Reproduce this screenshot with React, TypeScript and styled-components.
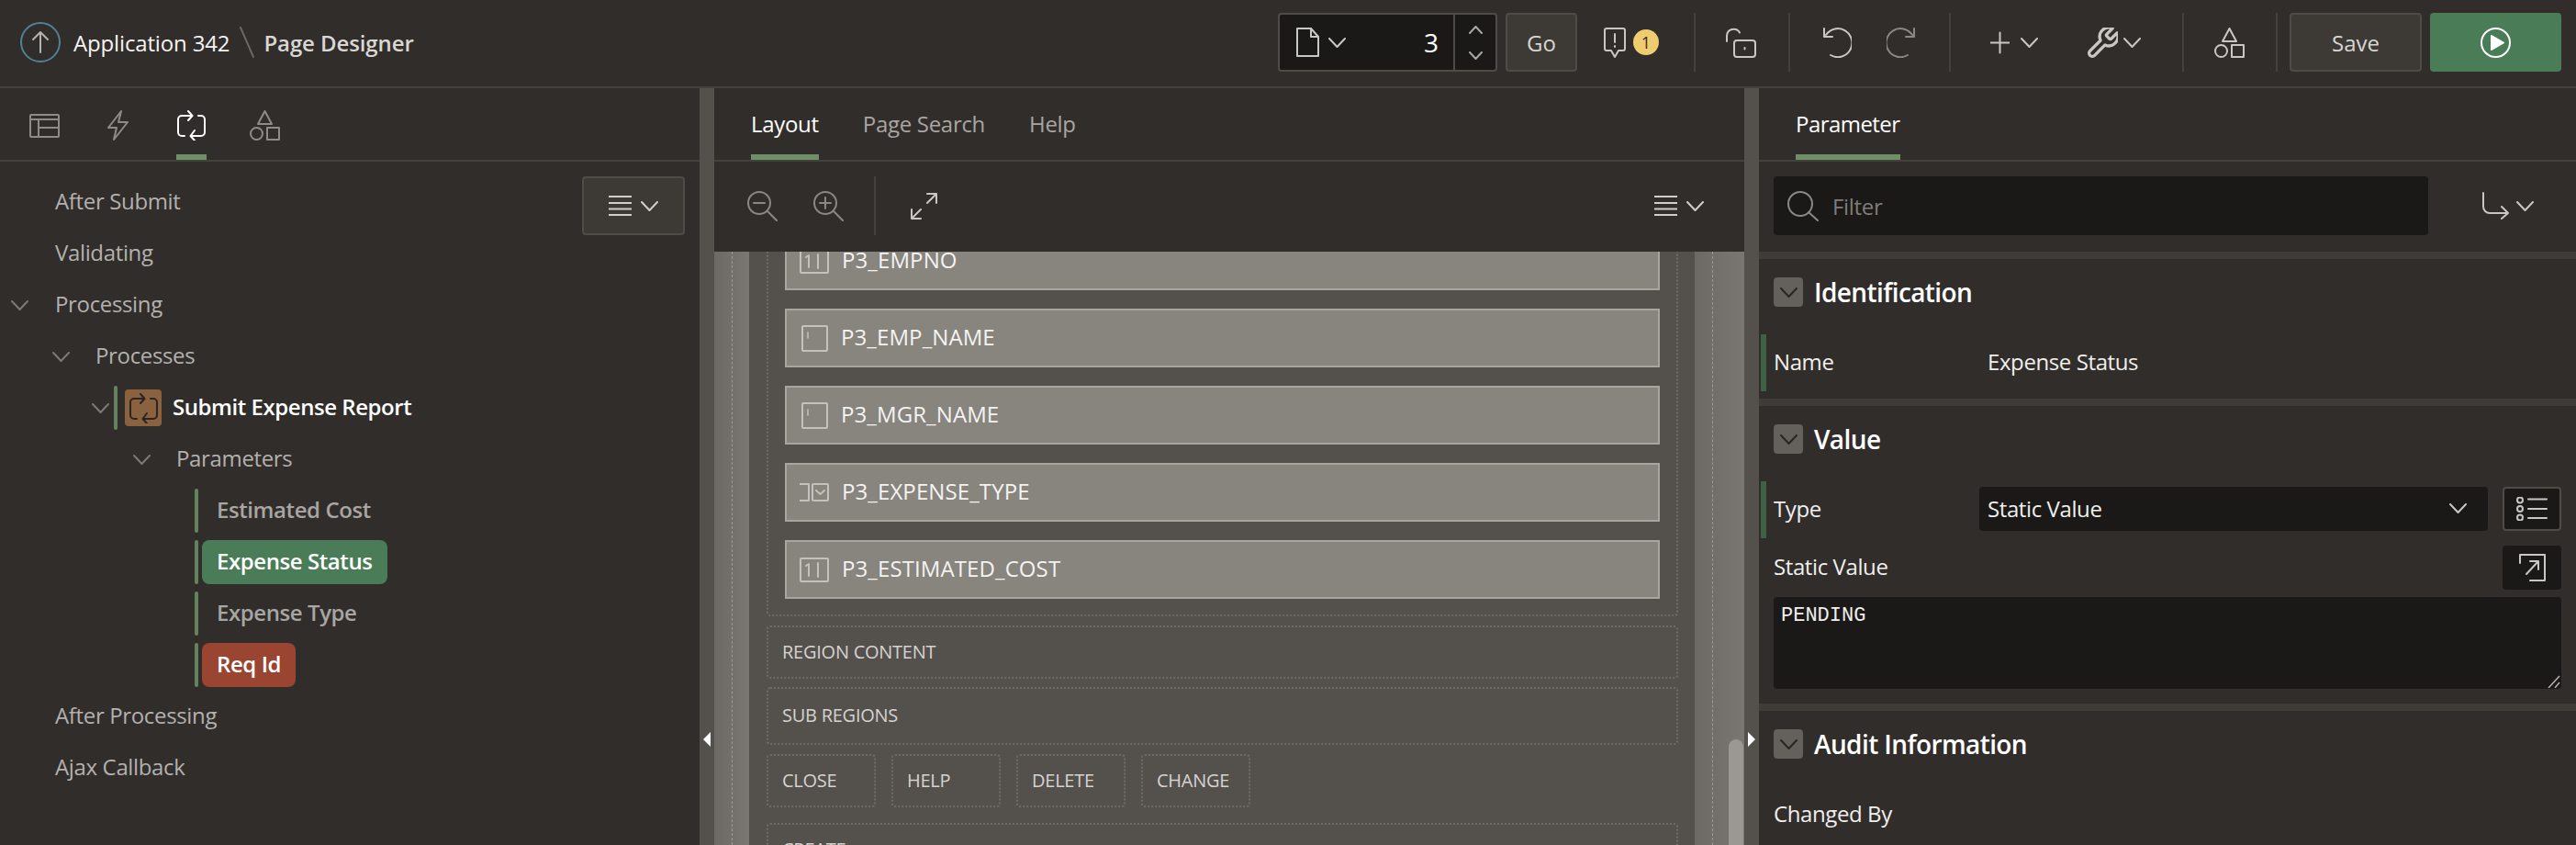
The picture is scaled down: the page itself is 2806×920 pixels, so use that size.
import {ReactNode} from 'react';
import styled, {createGlobalStyle} from 'styled-components';

const GlobalStyle = createGlobalStyle`
  html, body {
    margin: 0;
    padding: 0;
    background: #312d2a;
    overflow: hidden;
  }
  * {
    box-sizing: border-box;
  }
`;

const Page = styled.div`
  width: 2806px;
  height: 920px;
  display: flex;
  flex-direction: column;
  overflow: hidden;
  background: #312d2a;
  color: #fff;
  font-family: 'Open Sans', 'Noto Sans', sans-serif;
  font-size: 24px;
`;

const Icon = styled.svg<{$ml?: number; $color?: string}>`
  flex: none;
  display: block;
  fill: none;
  stroke: ${({$color}) => $color ?? '#c9c7c4'};
  stroke-width: 2;
  stroke-linecap: round;
  stroke-linejoin: round;
  margin-left: ${({$ml}) => $ml ?? 0}px;
`;

type IconProps = {ml?: number; color?: string};

const Chevron = ({ml, color}: IconProps) => (
  <Icon $ml={ml} $color={color} width={19} height={11} viewBox='0 0 19 11'>
    <path d='M1 1l8.500 9L18 1' />
  </Icon>
);

const Shapes = ({ml, color}: IconProps) => (
  <Icon $ml={ml} $color={color} width={33} height={33} viewBox='0 0 33 33'>
    <path d='M16.500 1l7.500 14H9z' />
    <circle cx='7.500' cy='25.500' r='6.500' />
    <rect x='19' y='19' width='13' height='13' />
  </Icon>
);

const ProcessGlyph = ({ml, color}: IconProps) => (
  <Icon $ml={ml} $color={color} width={33} height={33} viewBox='0 0 33 33'>
    <path d='M17 6H6a4 4 0 0 0-4 4v14a4 4 0 0 0 4 4h3' />
    <path d='M13 1l4.500 5L13 11' />
    <path d='M16 28h11a4 4 0 0 0 4-4V10a4 4 0 0 0-4-4h-3' />
    <path d='M20 22l-4.500 6 4.500 5' />
  </Icon>
);

const Hamburger = ({ml, color}: IconProps) => (
  <Icon $ml={ml} $color={color} width={25} height={22} viewBox='0 0 25 22'>
    <path d='M0 1h25M0 8h25M0 14.500h25M0 21h25' />
  </Icon>
);

/* Top bar */
const TopBar = styled.header`
  flex: none;
  height: 96px;
  display: flex;
  align-items: center;
  padding: 0 16px 2px 22px;
  border-bottom: 2px solid #44413d;
`;

const AppName = styled.span`
  margin-left: 14px;
  font-size: 24px;
  color: #f5f4f2;
  letter-spacing: -0.15px;
`;

const PageName = styled.span`
  margin-left: 10px;
  font-size: 24px;
  font-weight: 600;
  color: #d9d7d4;
  letter-spacing: -0.1px;
`;

const ToolRow = styled.div`
  margin-left: auto;
  display: flex;
  align-items: center;
`;

const PageSelector = styled.div`
  width: 239px;
  height: 64px;
  display: flex;
  align-items: center;
  background: #1a1917;
  border: 2px solid #4f4b47;
  border-radius: 4px;
  padding-left: 18px;
`;

const PageNumber = styled.span`
  margin-left: auto;
  margin-right: 16px;
  font-size: 28px;
  color: #fff;
`;

const Stepper = styled.div`
  width: 46px;
  height: 100%;
  display: flex;
  flex-direction: column;
  align-items: center;
  justify-content: center;
  gap: 19px;
  border-left: 2px solid #4f4b47;
`;

const ToolButton = styled.button<{$ml: number; $width: number}>`
  width: ${({$width}) => $width}px;
  height: 64px;
  margin-left: ${({$ml}) => $ml}px;
  padding: 0;
  background: #3d3a36;
  border: 2px solid #4f4b47;
  border-radius: 4px;
  color: #d8d6d3;
  font-family: inherit;
  font-size: 24px;
`;

const RunButton = styled.button`
  width: 143px;
  height: 64px;
  margin-left: 9px;
  padding: 0;
  display: flex;
  align-items: center;
  justify-content: center;
  background: #4a7d57;
  border: none;
  border-radius: 4px;
`;

const WarnBadge = styled.span`
  width: 28px;
  height: 28px;
  margin-left: 8px;
  display: flex;
  align-items: center;
  justify-content: center;
  border-radius: 50%;
  background: #f0cc71;
  color: #312d2a;
  font-size: 18px;
`;

const ToolDivider = styled.div<{$ml: number}>`
  flex: none;
  width: 2px;
  height: 64px;
  margin-left: ${({$ml}) => $ml}px;
  background: #44413d;
`;

/* Main columns */
const Columns = styled.div`
  flex: 1;
  min-height: 0;
  display: flex;
`;

const Splitter = styled.div`
  flex: none;
  width: 16px;
  position: relative;
  background: #54504c;
`;

const CollapseArrow = styled.div<{$dir: 'left' | 'right'}>`
  position: absolute;
  top: 701px;
  left: 4px;
  width: 0;
  height: 0;
  border-top: 8px solid transparent;
  border-bottom: 8px solid transparent;
  ${({$dir}) => ($dir === 'left' ? 'border-right: 8px solid #fff;' : 'border-left: 8px solid #fff;')}
`;

const TabBar = styled.div`
  flex: none;
  height: 80px;
  display: flex;
  align-items: stretch;
  gap: 48px;
  padding-left: 40px;
  border-bottom: 2px solid #44413d;
`;

const TextTab = styled.div<{$active?: boolean}>`
  height: 78px;
  display: flex;
  align-items: center;
  padding-top: 4px;
  font-size: 24px;
  letter-spacing: -0.3px;
  color: ${({$active}) => ($active ? '#fff' : '#a8a6a3')};
  border-bottom: 6px solid ${({$active}) => ($active ? '#6e8f68' : 'transparent')};
`;

const PropertyTab = styled(TextTab)`
  letter-spacing: -0.55px;
`;

/* Left: tree */
const LeftPanel = styled.aside`
  flex: none;
  width: 762px;
  display: flex;
  flex-direction: column;
`;

const IconTab = styled.div<{$width: number; $ml?: number; $top?: number; $active?: boolean}>`
  width: ${({$width}) => $width}px;
  height: 78px;
  margin-left: ${({$ml}) => $ml ?? 0}px;
  padding-top: ${({$top}) => $top ?? 24}px;
  display: flex;
  justify-content: center;
  border-bottom: 6px solid ${({$active}) => ($active ? '#6e8f68' : 'transparent')};
`;

const IconTabs = styled(TabBar)`
  gap: 0;
  padding-left: 32px;
`;

const Tree = styled.div`
  flex: 1;
  position: relative;
  padding-top: 16px;
`;

const MenuButton = styled.div`
  position: absolute;
  top: 16px;
  right: 16px;
  width: 112px;
  height: 64px;
  display: flex;
  align-items: center;
  justify-content: center;
  background: #3d3a36;
  border: 2px solid #4f4b47;
  border-radius: 4px;
`;

const TreeRow = styled.div<{$pad: number}>`
  height: 56px;
  display: flex;
  align-items: center;
  padding-left: ${({$pad}) => $pad}px;
`;

const TreeLabel = styled.span<{$ml?: number}>`
  margin-left: ${({$ml}) => $ml ?? 0}px;
  padding-bottom: 4px;
  color: #b3b1ae;
  letter-spacing: -0.35px;
`;

const Marker = styled.div<{$ml?: number}>`
  flex: none;
  width: 4px;
  height: 48px;
  margin-left: ${({$ml}) => $ml ?? 0}px;
  border-radius: 2px;
  background: #64825f;
`;

const ProcessBadge = styled.div`
  flex: none;
  width: 40px;
  height: 40px;
  margin-left: 8px;
  display: flex;
  align-items: center;
  justify-content: center;
  background: #8a6240;
  border-radius: 4px;
`;

const NodeTitle = styled.span`
  margin-left: 12px;
  padding-bottom: 4px;
  font-weight: 600;
  color: #fff;
  letter-spacing: -0.45px;
`;

const ParamNode = styled.div<{$tone?: 'green' | 'red'}>`
  height: 48px;
  margin-left: 4px;
  padding: 0 16px 4px;
  display: flex;
  align-items: center;
  border-radius: 8px;
  font-weight: 600;
  letter-spacing: -0.42px;
  color: ${({$tone}) => ($tone ? '#fff' : '#a8a6a3')};
  background: ${({$tone}) => ($tone === 'green' ? '#4a7d57' : $tone === 'red' ? '#9a4432' : 'transparent')};
`;

/* Center: layout canvas */
const CenterPanel = styled.main`
  flex: none;
  width: 1122px;
  display: flex;
  flex-direction: column;
`;

const CanvasToolbar = styled.div`
  flex: none;
  height: 98px;
  display: flex;
  align-items: center;
  padding: 0 44px 2px 36px;
`;

const MutedDivider = styled.div`
  flex: none;
  width: 2px;
  height: 64px;
  margin: 0 38px 0 33px;
  background: #44413d;
`;

const CanvasMenu = styled.div`
  margin-left: auto;
  display: flex;
  align-items: center;
  gap: 10px;
`;

const Canvas = styled.div`
  flex: 1;
  min-height: 0;
  position: relative;
  display: flex;
  overflow: hidden;
  background: #54504c;
`;

const Gutter = styled.div<{$width: number; $dotAt: number}>`
  flex: none;
  width: ${({$width}) => $width}px;
  background: linear-gradient(90deg, #6c6863, #7a7671);
  position: relative;
  &::after {
    content: '';
    position: absolute;
    top: 0;
    bottom: 0;
    left: ${({$dotAt}) => $dotAt}px;
    border-left: 1px dashed #9c9994;
  }
`;

const CanvasBody = styled.div`
  flex: 1;
  min-width: 0;
  padding: 0 18px 0 19px;
`;

const ItemsBox = styled.div`
  margin-top: -40px;
  padding: 16px 18px 17px;
  display: flex;
  flex-direction: column;
  gap: 20px;
  border: 2px dotted #6f6b66;
  border-radius: 4px;
`;

const PageItem = styled.div`
  height: 64px;
  display: flex;
  align-items: center;
  padding-left: 14px;
  background: #88847e;
  border: 2px solid #a8a5a0;
  color: #f4f3f1;
  font-size: 24px;
  letter-spacing: 0.1px;
`;

const ItemName = styled.span`
  padding-bottom: 4px;
  margin-left: 14px;
`;

const DropZone = styled.div<{$height: number; $mt: number}>`
  height: ${({$height}) => $height}px;
  margin-top: ${({$mt}) => $mt}px;
  display: flex;
  align-items: center;
  padding: 0 0 2px 15px;
  border: 2px dotted #6f6b66;
  border-radius: 4px;
  color: #d5d3d0;
  font-size: 20px;
  letter-spacing: -0.25px;
`;

const ButtonZones = styled.div`
  margin-top: 10px;
  display: flex;
  gap: 17px;
`;

const ButtonZone = styled.div`
  width: 119px;
  height: 58px;
  display: flex;
  align-items: center;
  padding: 0 0 2px 15px;
  border: 2px dotted #6f6b66;
  border-radius: 4px;
  color: #d5d3d0;
  font-size: 20px;
  letter-spacing: -0.25px;
`;

const ScrollThumb = styled.div`
  position: absolute;
  top: 531px;
  right: 1px;
  width: 16px;
  height: 130px;
  border-radius: 8px 8px 0 0;
  background: #9b9894;
`;

/* Right: property editor */
const RightPanel = styled.aside`
  flex: 1;
  min-width: 0;
  display: flex;
  flex-direction: column;
`;

const FilterBar = styled.div`
  flex: none;
  height: 98px;
  display: flex;
  align-items: center;
  padding: 0 46px 2px 16px;
`;

const FilterField = styled.div`
  width: 714px;
  height: 64px;
  display: flex;
  align-items: center;
  padding-left: 15px;
  background: #1a1917;
  border-radius: 4px;
  color: #7f7c79;
  letter-spacing: -0.3px;
`;

const FilterText = styled.span`
  margin-left: 15px;
`;

const SectionBand = styled.div`
  flex: none;
  height: 8px;
  background: #3f3c38;
`;

const SectionHead = styled.div`
  flex: none;
  height: 82px;
  display: flex;
  align-items: flex-start;
  padding: 20px 0 0 16px;
`;

const Toggle = styled.div`
  width: 32px;
  height: 32px;
  display: flex;
  align-items: center;
  justify-content: center;
  background: #64605c;
  border-radius: 4px;
`;

const SectionTitle = styled.h2`
  margin: 0 0 0 12px;
  line-height: 32px;
  font-size: 28px;
  font-weight: 600;
  letter-spacing: -0.6px;
  color: #fff;
`;

const PropRow = styled.div<{$marked?: boolean}>`
  flex: none;
  height: 62px;
  margin: 0 16px 8px 2px;
  display: flex;
  align-items: center;
  padding: 0 0 2px 8px;
  border-left: 6px solid ${({$marked}) => ($marked ? '#3f6146' : 'transparent')};
  color: #f0efed;
  letter-spacing: -0.4px;
`;

const PropLabel = styled.span`
  flex: none;
  width: 224px;
  padding-bottom: 2px;
`;

const PropValue = styled.span`
  margin-left: 9px;
  padding-bottom: 2px;
`;

const SelectField = styled.div`
  width: 554px;
  height: 48px;
  display: flex;
  align-items: center;
  justify-content: space-between;
  padding: 0 23px 2px 9px;
  background: #1a1917;
  border-radius: 4px;
`;

const ListButton = styled.div`
  flex: none;
  width: 64px;
  height: 48px;
  margin-left: 16px;
  display: flex;
  align-items: center;
  justify-content: center;
  background: #1a1917;
  border-radius: 4px;
  border: 2px solid #4f4b47;
`;

const PopoutButton = styled(ListButton)`
  margin-left: auto;
  border-color: #1a1917;
`;

const StaticRow = styled.div`
  flex: none;
  height: 48px;
  margin: 0 16px 8px;
  display: flex;
  align-items: center;
  color: #f0efed;
  letter-spacing: -0.4px;
`;

const StaticLabel = styled.span`
  padding-bottom: 3px;
`;

const ValueArea = styled.div`
  flex: none;
  height: 100px;
  margin: 0 16px 16px;
  position: relative;
  padding: 8px;
  background: #1a1917;
  border-radius: 4px;
  font-family: 'Liberation Mono', monospace;
  font-size: 22px;
  line-height: 26px;
  color: #f0efed;
`;

const ResizeGrip = styled.svg`
  position: absolute;
  right: 1px;
  bottom: 1px;
  fill: none;
  stroke: #b5b3b0;
  stroke-width: 1.500;
`;

const Process = ({children}: {children: ReactNode}) => <ProcessBadge>{children}</ProcessBadge>;

const NumberFieldIcon = () => (
  <Icon $color='#c4c2be' width={32} height={27} viewBox='0 0 32 27'>
    <rect x='1' y='1' width='30' height='25' rx='1' />
    <path d='M7 9l3-2v13M20 6v15' />
  </Icon>
);

const TextFieldIcon = () => (
  <Icon $ml={2} $color='#c4c2be' width={29} height={29} viewBox='0 0 29 29'>
    <rect x='1' y='1' width='27' height='27' rx='1' />
    <path d='M7 8v6' strokeWidth='1.500' />
  </Icon>
);

const SelectFieldIcon = () => (
  <Icon $color='#c4c2be' width={32} height={22} viewBox='0 0 32 22'>
    <path d='M0 2h10M0 20h10M10 2v18' />
    <rect x='14' y='2' width='17' height='18' rx='1' />
    <path d='M18 9l4.500 4 4.500-4' />
  </Icon>
);

const items = [
  {name: 'P3_EMPNO', icon: <NumberFieldIcon />, narrow: false},
  {name: 'P3_EMP_NAME', icon: <TextFieldIcon />, narrow: true},
  {name: 'P3_MGR_NAME', icon: <TextFieldIcon />, narrow: true},
  {name: 'P3_EXPENSE_TYPE', icon: <SelectFieldIcon />, narrow: false},
  {name: 'P3_ESTIMATED_COST', icon: <NumberFieldIcon />, narrow: false},
];

const App = () => (
  <Page>
    <GlobalStyle />
    <TopBar>
      <Icon width={44} height={44} viewBox='0 0 44 44'>
        <circle cx='22' cy='22' r='21' stroke='#4f8296' />
        <path d='M22 33V11M14 19l8-8 8 8' stroke='#b5b3b0' />
      </Icon>
      <AppName>Application 342</AppName>
      <Icon $ml={11} $color='#6a6662' width={16} height={34} viewBox='0 0 16 34'>
        <path d='M1 1l14 32' />
      </Icon>
      <PageName>Page Designer</PageName>
      <ToolRow>
        <PageSelector>
          <Icon width={25} height={32} viewBox='0 0 25 32'>
            <path d='M1 1h15l8 9v21H1z' />
            <path d='M16 1v9h8' />
          </Icon>
          <Chevron ml={10} />
          <PageNumber>3</PageNumber>
          <Stepper>
            <Icon $color='#a8a6a3' width={15} height={9} viewBox='0 0 15 9'>
              <path d='M1 8l6.500-7L14 8' />
            </Icon>
            <Icon $color='#a8a6a3' width={15} height={9} viewBox='0 0 15 9'>
              <path d='M1 1l6.500 7L14 1' />
            </Icon>
          </Stepper>
        </PageSelector>
        <ToolButton $ml={9} $width={78}>
          Go
        </ToolButton>
        <Icon $ml={29} width={24} height={33} viewBox='0 0 24 33'>
          <path d='M3 1h18a2 2 0 0 1 2 2v20a2 2 0 0 1-2 2h-5l-4 7-4-7H3a2 2 0 0 1-2-2V3a2 2 0 0 1 2-2z' />
          <path d='M12 7v9M12 20v1' />
        </Icon>
        <WarnBadge>1</WarnBadge>
        <ToolDivider $ml={38} />
        <Icon $ml={33} width={33} height={33} viewBox='0 0 33 33'>
          <path d='M1 15V9a7.500 7.500 0 0 1 14-3.500' />
          <rect x='9' y='14' width='23' height='18' rx='3' />
          <path d='M20.500 22v1.500' />
        </Icon>
        <ToolDivider $ml={35} />
        <Icon $ml={34} width={33} height={33} viewBox='0 0 33 33'>
          <path d='M5 8A15.500 15.500 0 1 1 10 30' />
          <path d='M3 1v9h9' />
        </Icon>
        <Icon $ml={38} $color='#8b8885' width={33} height={33} viewBox='0 0 33 33'>
          <path d='M28 8A15.500 15.500 0 1 0 23 30' />
          <path d='M30 1v9h-9' />
        </Icon>
        <ToolDivider $ml={35} />
        <Icon $ml={43} width={21} height={25} viewBox='0 0 21 25'>
          <path d='M10.500 1.500v22M0 12.500h21' />
        </Icon>
        <Chevron ml={12} />
        <Icon $ml={54} width={33} height={33} viewBox='2 2 20 20' strokeWidth={1.25}>
          <path d='M14.700 6.300a1 1 0 0 0 0 1.400l1.600 1.600a1 1 0 0 0 1.400 0l3.770-3.770a6 6 0 0 1-7.940 7.940l-6.910 6.910a2.120 2.120 0 0 1-3-3l6.910-6.910a6 6 0 0 1 7.940-7.940l-3.760 3.760z' />
        </Icon>
        <Chevron ml={6} />
        <ToolDivider $ml={45} />
        <Shapes ml={33} />
        <ToolDivider $ml={34} />
        <ToolButton $ml={13} $width={144}>
          Save
        </ToolButton>
        <RunButton>
          <Icon $color='#fff' width={33} height={33} viewBox='0 0 33 33'>
            <circle cx='16.500' cy='16.500' r='15.500' />
            <path d='M12 9l13 7.500L12 24z' fill='#fff' />
          </Icon>
        </RunButton>
      </ToolRow>
    </TopBar>
    <Columns>
      <LeftPanel>
        <IconTabs>
          <IconTab $width={33} $top={28}>
            <Icon $color='#8f8c88' width={33} height={26} viewBox='0 0 33 26'>
              <rect x='1' y='1' width='31' height='24' rx='1' />
              <path d='M1 6h31M10 6v19M10 15h22' />
            </Icon>
          </IconTab>
          <IconTab $width={25} $ml={51}>
            <Icon $color='#8f8c88' width={25} height={33} viewBox='0 0 25 33'>
              <path d='M16 1L2 19h9l-3 13 15-19H13z' />
            </Icon>
          </IconTab>
          <IconTab $width={33} $ml={51} $active>
            <ProcessGlyph color='#fff' />
          </IconTab>
          <IconTab $width={33} $ml={47}>
            <Shapes color='#8f8c88' />
          </IconTab>
        </IconTabs>
        <Tree>
          <MenuButton>
            <Hamburger color='#d0cecb' />
            <Chevron ml={10} color='#d0cecb' />
          </MenuButton>
          <TreeRow $pad={60}>
            <TreeLabel>After Submit</TreeLabel>
          </TreeRow>
          <TreeRow $pad={60}>
            <TreeLabel>Validating</TreeLabel>
          </TreeRow>
          <TreeRow $pad={12}>
            <Chevron color='#7c7976' />
            <TreeLabel $ml={29}>Processing</TreeLabel>
          </TreeRow>
          <TreeRow $pad={57}>
            <Chevron color='#7c7976' />
            <TreeLabel $ml={28}>Processes</TreeLabel>
          </TreeRow>
          <TreeRow $pad={100}>
            <Chevron color='#7c7976' />
            <Marker $ml={5} />
            <Process>
              <ProcessGlyph color='#2a2522' />
            </Process>
            <NodeTitle>Submit Expense Report</NodeTitle>
          </TreeRow>
          <TreeRow $pad={145}>
            <Chevron color='#7c7976' />
            <TreeLabel $ml={28}>Parameters</TreeLabel>
          </TreeRow>
          <TreeRow $pad={212}>
            <Marker />
            <ParamNode>Estimated Cost</ParamNode>
          </TreeRow>
          <TreeRow $pad={212}>
            <Marker />
            <ParamNode $tone='green'>Expense Status</ParamNode>
          </TreeRow>
          <TreeRow $pad={212}>
            <Marker />
            <ParamNode>Expense Type</ParamNode>
          </TreeRow>
          <TreeRow $pad={212}>
            <Marker />
            <ParamNode $tone='red'>Req Id</ParamNode>
          </TreeRow>
          <TreeRow $pad={60}>
            <TreeLabel>After Processing</TreeLabel>
          </TreeRow>
          <TreeRow $pad={60}>
            <TreeLabel>Ajax Callback</TreeLabel>
          </TreeRow>
        </Tree>
      </LeftPanel>
      <Splitter>
        <CollapseArrow $dir='left' />
      </Splitter>
      <CenterPanel>
        <TabBar>
          <TextTab $active>Layout</TextTab>
          <TextTab>Page Search</TextTab>
          <TextTab>Help</TextTab>
        </TabBar>
        <CanvasToolbar>
          <Icon $color='#8a8784' width={33} height={33} viewBox='0 0 33 33'>
            <circle cx='13' cy='13' r='12' />
            <path d='M7 13h12M22 22l10 10' />
          </Icon>
          <Icon $ml={39} $color='#8a8784' width={33} height={33} viewBox='0 0 33 33'>
            <circle cx='13' cy='13' r='12' />
            <path d='M7 13h12M13 7v12M22 22l10 10' />
          </Icon>
          <MutedDivider />
          <Icon width={29} height={29} viewBox='0 0 29 29'>
            <path d='M1 28L11 18M18 11L28 1M1 18v10h10M18 1h10v10' />
          </Icon>
          <CanvasMenu>
            <Hamburger color='#d0cecb' />
            <Chevron color='#d0cecb' />
          </CanvasMenu>
        </CanvasToolbar>
        <Canvas>
          <Gutter $width={38} $dotAt={19} />
          <CanvasBody>
            <ItemsBox>
              {items.map(item => (
                <PageItem key={item.name}>
                  {item.icon}
                  <ItemName>{item.name}</ItemName>
                </PageItem>
              ))}
            </ItemsBox>
            <DropZone $mt={10} $height={58}>
              REGION CONTENT
            </DropZone>
            <DropZone $mt={9} $height={63}>
              SUB REGIONS
            </DropZone>
            <ButtonZones>
              <ButtonZone>CLOSE</ButtonZone>
              <ButtonZone>HELP</ButtonZone>
              <ButtonZone>DELETE</ButtonZone>
              <ButtonZone>CHANGE</ButtonZone>
            </ButtonZones>
            <DropZone $mt={17} $height={58}>
              CREATE
            </DropZone>
          </CanvasBody>
          <Gutter $width={54} $dotAt={19} />
          <ScrollThumb />
        </Canvas>
      </CenterPanel>
      <Splitter>
        <CollapseArrow $dir='right' />
      </Splitter>
      <RightPanel>
        <TabBar>
          <PropertyTab $active>Parameter</PropertyTab>
        </TabBar>
        <FilterBar>
          <FilterField>
            <Icon $color='#8a8784' width={34} height={33} viewBox='0 0 34 33'>
              <circle cx='14' cy='14' r='13' />
              <path d='M23 23l10 9' />
            </Icon>
            <FilterText>Filter</FilterText>
          </FilterField>
          <Icon $ml={59} width={29} height={30} viewBox='0 0 29 30'>
            <path d='M1 1v15a7 7 0 0 0 7 7h20M21 16l7 7-7 6' />
          </Icon>
          <Chevron ml={8} />
        </FilterBar>
        <SectionBand />
        <SectionHead>
          <Toggle>
            <Chevron color='#2a2522' />
          </Toggle>
          <SectionTitle>Identification</SectionTitle>
        </SectionHead>
        <PropRow $marked>
          <PropLabel>Name</PropLabel>
          <PropValue>Expense Status</PropValue>
        </PropRow>
        <SectionBand />
        <SectionHead>
          <Toggle>
            <Chevron color='#2a2522' />
          </Toggle>
          <SectionTitle>Value</SectionTitle>
        </SectionHead>
        <PropRow $marked>
          <PropLabel>Type</PropLabel>
          <SelectField>
            Static Value
            <Chevron />
          </SelectField>
          <ListButton>
            <Icon width={34} height={26} viewBox='0 0 34 26'>
              <circle cx='4' cy='3.500' r='3' />
              <circle cx='4' cy='13' r='3' />
              <circle cx='4' cy='22.500' r='3' />
              <path d='M13 2.500h20M13 13h20M13 23h20' />
            </Icon>
          </ListButton>
        </PropRow>
        <StaticRow>
          <StaticLabel>Static Value</StaticLabel>
          <PopoutButton>
            <Icon width={29} height={30} viewBox='0 0 29 30'>
              <path d='M1 10V1h27v28H12' />
              <path d='M8 22L21 8M12 8h9v9' />
            </Icon>
          </PopoutButton>
        </StaticRow>
        <ValueArea>
          PENDING
          <ResizeGrip width={14} height={14} viewBox='0 0 14 14'>
            <path d='M1 14L13 1M8 14l5-6' />
          </ResizeGrip>
        </ValueArea>
        <SectionBand />
        <SectionHead>
          <Toggle>
            <Chevron color='#2a2522' />
          </Toggle>
          <SectionTitle>Audit Information</SectionTitle>
        </SectionHead>
        <PropRow>
          <PropLabel>Changed By</PropLabel>
        </PropRow>
      </RightPanel>
    </Columns>
  </Page>
);

export default App;
